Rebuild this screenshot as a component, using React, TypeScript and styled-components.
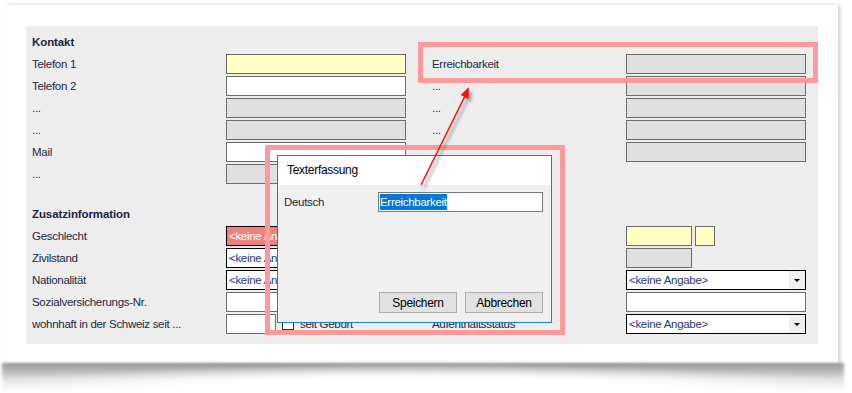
import React from 'react';
import styled, { createGlobalStyle } from 'styled-components';

const GlobalStyle = createGlobalStyle`
  html, body {
    margin: 0;
    padding: 0;
    background: #ffffff;
  }
  body {
    font-family: "Liberation Sans", Arial, sans-serif;
    font-size: 11.5px;
    letter-spacing: -0.3px;
    color: #1c2744;
  }
`;

const Stage = styled.div`
  position: relative;
  width: 852px;
  height: 393px;
  overflow: hidden;
  padding: 5px 14px 0 6px;
  box-sizing: border-box;
`;

const Card = styled.div`
  position: relative;
  width: 832px;
  height: 358px;
  background: #ffffff;
  padding: 21px 20px 19px 20px;
  box-sizing: border-box;
  box-shadow: 2px 0 4px rgba(0, 0, 0, 0.2);

  /* curled paper shadow under the card */
  &::after {
    content: '';
    position: absolute;
    top: 100%;
    left: -4px;
    right: -6px;
    height: 30px;
    background:
      radial-gradient(ellipse 58% 95% at 50% 100%, #ffffff 55%, rgba(255, 255, 255, 0) 100%),
      linear-gradient(to bottom, rgba(0, 0, 0, 0.42), rgba(0, 0, 0, 0.12) 55%, rgba(0, 0, 0, 0) 100%);
    filter: blur(1.5px);
  }
`;

const Panel = styled.div`
  height: 318px;
  background: #ededed;
  padding: 6px 12px 10px 6px;
  box-sizing: border-box;
`;

const Section = styled.div<{ $gapTop?: number }>`
  display: flex;
  flex-direction: column;
  gap: 2px;
  margin-top: ${p => p.$gapTop ?? 0}px;
`;

const Heading = styled.div`
  height: 20px;
  line-height: 20px;
  font-weight: bold;
  font-size: 11.5px;
  letter-spacing: -0.1px;
  color: #1b2440;
`;

const Row = styled.div`
  display: flex;
  gap: 26px;
  height: 20px;
`;

const Field = styled.div`
  display: grid;
  grid-template-columns: 194px 180px;
  align-items: center;
  height: 20px;
`;

const Label = styled.span`
  white-space: nowrap;
  overflow: hidden;
`;

const Group = styled.div`
  display: flex;
  align-items: center;
  gap: 3px;
  height: 20px;
`;

const tones = {
  yellow: '#ffffc3',
  white: '#ffffff',
  gray: '#e0e0e0',
};

const Input = styled.div<{ $tone?: keyof typeof tones; $w?: number }>`
  width: ${p => (p.$w ? `${p.$w}px` : '100%')};
  height: 20px;
  box-sizing: border-box;
  border: 1px solid #6b6b6b;
  background: ${p => tones[p.$tone ?? 'white']};
`;

const SelectBox = styled.div<{ $bg?: string; $fg?: string }>`
  display: flex;
  align-items: center;
  height: 20px;
  box-sizing: border-box;
  border: 1px solid #000;
  background: ${p => p.$bg ?? '#fff'};
  color: ${p => p.$fg ?? '#2a3678'};
`;

const SelectValue = styled.span`
  flex: 1;
  padding-left: 2px;
  white-space: nowrap;
  overflow: hidden;
`;

const DropButton = styled.span`
  width: 16px;
  height: 100%;
  background: #efefef;
  display: flex;
  align-items: center;
  justify-content: center;

  &::after {
    content: '';
    border-left: 3px solid transparent;
    border-right: 3px solid transparent;
    border-top: 3px solid #000;
  }
`;

const CheckWrap = styled.label`
  display: flex;
  align-items: center;
  gap: 6px;
  margin-left: 3px;
  white-space: nowrap;
`;

const CheckBox = styled.span`
  width: 12px;
  height: 12px;
  box-sizing: border-box;
  border: 1px solid #333;
  background: #fff;
`;

const Highlight = styled.div<{ $x: number; $y: number; $w: number; $h: number }>`
  position: absolute;
  left: ${p => p.$x}px;
  top: ${p => p.$y}px;
  width: ${p => p.$w}px;
  height: ${p => p.$h}px;
  box-sizing: border-box;
  border: 5px solid #ff9a9a;
  z-index: 3;
`;

const Dialog = styled.div`
  position: absolute;
  left: 277px;
  top: 155px;
  width: 275px;
  height: 168px;
  box-sizing: border-box;
  border: 1px solid #1b7fd1;
  background: #f0f0f0;
  display: flex;
  flex-direction: column;
  z-index: 2;
`;

const TitleBar = styled.div`
  height: 29px;
  line-height: 29px;
  padding-left: 9px;
  background: #ffffff;
  color: #000;
  font-size: 12px;
`;

const DialogBody = styled.div`
  flex: 1;
  display: flex;
  flex-direction: column;
  justify-content: space-between;
  padding: 7px 8px 9px 6px;
`;

const FormRow = styled.div`
  display: grid;
  grid-template-columns: 94px 1fr;
  align-items: center;
`;

const TextBox = styled.div`
  height: 20px;
  box-sizing: border-box;
  border: 1px solid #7a7a7a;
  background: #fff;
  padding: 1px 0 0 1px;
`;

const Selected = styled.span`
  display: inline-block;
  line-height: 16px;
  background: #0078d7;
  color: #fff;
`;

const ButtonRow = styled.div`
  display: flex;
  justify-content: flex-end;
  gap: 8px;
`;

const Button = styled.button`
  width: 78px;
  height: 21px;
  padding: 0;
  box-sizing: border-box;
  border: 1px solid #adadad;
  background: #e1e1e1;
  color: #000;
  font-family: inherit;
  font-size: 12px;
  letter-spacing: -0.3px;
`;

const ArrowLayer = styled.svg`
  position: absolute;
  left: 0;
  top: 0;
  z-index: 4;
  pointer-events: none;
`;

const Select = ({ bg, fg }: { bg?: string; fg?: string }) => (
  <SelectBox $bg={bg} $fg={fg}>
    <SelectValue>&lt;keine Angabe&gt;</SelectValue>
    <DropButton />
  </SelectBox>
);

const Empty = () => <Label />;

export default function App() {
  return (
    <>
      <GlobalStyle />
      <Stage>
        <Card>
          <Panel>
            <Section>
              <Heading>Kontakt</Heading>
              <Row>
                <Field>
                  <Label>Telefon 1</Label>
                  <Input $tone="yellow" />
                </Field>
                <Field>
                  <Label>Erreichbarkeit</Label>
                  <Input $tone="gray" />
                </Field>
              </Row>
              <Row>
                <Field>
                  <Label>Telefon 2</Label>
                  <Input />
                </Field>
                <Field>
                  <Label>...</Label>
                  <Input $tone="gray" />
                </Field>
              </Row>
              <Row>
                <Field>
                  <Label>...</Label>
                  <Input $tone="gray" />
                </Field>
                <Field>
                  <Label>...</Label>
                  <Input $tone="gray" />
                </Field>
              </Row>
              <Row>
                <Field>
                  <Label>...</Label>
                  <Input $tone="gray" />
                </Field>
                <Field>
                  <Label>...</Label>
                  <Input $tone="gray" />
                </Field>
              </Row>
              <Row>
                <Field>
                  <Label>Mail</Label>
                  <Input />
                </Field>
                <Field>
                  <Empty />
                  <Input $tone="gray" />
                </Field>
              </Row>
              <Row>
                <Field>
                  <Label>...</Label>
                  <Input $tone="gray" />
                </Field>
              </Row>
            </Section>

            <Section $gapTop={20}>
              <Heading>Zusatzinformation</Heading>
              <Row>
                <Field>
                  <Label>Geschlecht</Label>
                  <Select bg="#f08080" fg="#ffffff" />
                </Field>
                <Field>
                  <Empty />
                  <Group>
                    <Input $tone="yellow" $w={66} />
                    <Input $tone="yellow" $w={20} />
                  </Group>
                </Field>
              </Row>
              <Row>
                <Field>
                  <Label>Zivilstand</Label>
                  <Select />
                </Field>
                <Field>
                  <Empty />
                  <Group>
                    <Input $tone="gray" $w={66} />
                  </Group>
                </Field>
              </Row>
              <Row>
                <Field>
                  <Label>Nationalität</Label>
                  <Select />
                </Field>
                <Field>
                  <Empty />
                  <Select />
                </Field>
              </Row>
              <Row>
                <Field>
                  <Label>Sozialversicherungs-Nr.</Label>
                  <Input />
                </Field>
                <Field>
                  <Empty />
                  <Input />
                </Field>
              </Row>
              <Row>
                <Field>
                  <Label>wohnhaft in der Schweiz seit ...</Label>
                  <Group>
                    <Input $w={50} />
                    <CheckWrap>
                      <CheckBox />
                      seit Geburt
                    </CheckWrap>
                  </Group>
                </Field>
                <Field>
                  <Label>Aufenthaltsstatus</Label>
                  <Select />
                </Field>
              </Row>
            </Section>
          </Panel>
        </Card>

        <Highlight $x={418} $y={42} $w={400} $h={41} />
        <Highlight $x={265} $y={145} $w={300} $h={190} />

        <Dialog>
          <TitleBar>Texterfassung</TitleBar>
          <DialogBody>
            <FormRow>
              <Label>Deutsch</Label>
              <TextBox>
                <Selected>Erreichbarkeit</Selected>
              </TextBox>
            </FormRow>
            <ButtonRow>
              <Button>Speichern</Button>
              <Button>Abbrechen</Button>
            </ButtonRow>
          </DialogBody>
        </Dialog>

        <ArrowLayer width="852" height="393" viewBox="0 0 852 393">
          <defs>
            <filter id="arrowShadow" x="-50%" y="-50%" width="200%" height="200%">
              <feGaussianBlur stdDeviation="1.6" />
            </filter>
          </defs>
          <g transform="translate(3 3)" filter="url(#arrowShadow)" opacity="0.45">
            <line x1="421" y1="185" x2="465" y2="96" stroke="#555" strokeWidth="2" />
            <polygon points="469,87 468.6,99 460.6,95" fill="#555" />
          </g>
          <line x1="421" y1="185" x2="465" y2="96" stroke="#ff1010" strokeWidth="1.6" />
          <polygon points="469,87 468.6,99 460.6,95" fill="#ff1010" />
        </ArrowLayer>
      </Stage>
    </>
  );
}
